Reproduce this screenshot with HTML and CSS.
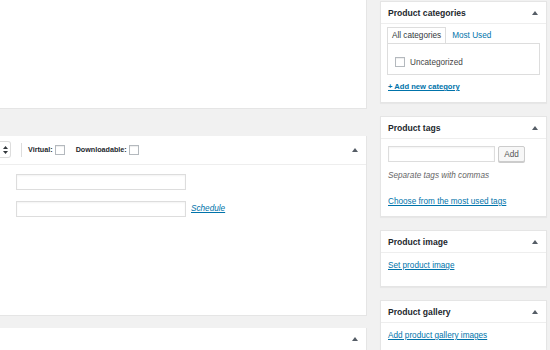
FILE: index.html
```html
<!DOCTYPE html>
<html lang="en">
<head>
    <meta charset="UTF-8">
    <title>Edit product</title>
    <link rel="stylesheet" href="styles.css">
</head>
<body>

    <div class="page">
        <div class="main">
            <div class="panel panel-top"></div>

            <div class="panel product-data">
                <div class="pd-head">
                    <div class="type-select">
                        <svg width="5" height="8" viewBox="0 0 5 8"><polygon points="0,3 2.5,0 5,3" fill="#32373c"/><polygon points="0,5 2.5,8 5,5" fill="#32373c"/></svg>
                    </div>
                    <span class="divider"></span>
                    <label class="opt">Virtual: <span class="check"></span></label>
                    <label class="opt">Downloadable: <span class="check"></span></label>
                    <span class="toggle"><svg width="6" height="4" viewBox="0 0 6 4"><polygon points="0,4 3,0 6,4" fill="#555d66"/></svg></span>
                </div>
                <div class="pd-body">
                    <div class="field"><span class="text-input"></span></div>
                    <div class="field"><span class="text-input"></span><a class="schedule" href="#">Schedule</a></div>
                </div>
            </div>

            <div class="panel panel-bottom">
                <div class="pb-head">
                    <span class="toggle"><svg width="6" height="4" viewBox="0 0 6 4"><polygon points="0,4 3,0 6,4" fill="#555d66"/></svg></span>
                </div>
            </div>
        </div>

        <aside class="side">
            <div class="box box-cats">
                <div class="box-head">
                    <h2>Product categories</h2>
                    <svg width="6" height="4" viewBox="0 0 6 4"><polygon points="0,4 3,0 6,4" fill="#555d66"/></svg>
                </div>
                <div class="box-body">
                    <div class="tabs">
                        <span class="tab active">All categories</span>
                        <a class="tab" href="#">Most Used</a>
                    </div>
                    <div class="tab-panel">
                        <label class="cat"><span class="check"></span>Uncategorized</label>
                    </div>
                    <a class="link add-cat" href="#">+ Add new category</a>
                </div>
            </div>

            <div class="box box-tags">
                <div class="box-head">
                    <h2>Product tags</h2>
                    <svg width="6" height="4" viewBox="0 0 6 4"><polygon points="0,4 3,0 6,4" fill="#555d66"/></svg>
                </div>
                <div class="box-body">
                    <div class="tag-row">
                        <span class="text-input tag-input"></span>
                        <button class="button">Add</button>
                    </div>
                    <p class="howto">Separate tags with commas</p>
                    <a class="link most-used" href="#">Choose from the most used tags</a>
                </div>
            </div>

            <div class="box box-image">
                <div class="box-head">
                    <h2>Product image</h2>
                    <svg width="6" height="4" viewBox="0 0 6 4"><polygon points="0,4 3,0 6,4" fill="#555d66"/></svg>
                </div>
                <div class="box-body">
                    <a class="link" href="#">Set product image</a>
                </div>
            </div>

            <div class="box box-gallery">
                <div class="box-head">
                    <h2>Product gallery</h2>
                    <svg width="6" height="4" viewBox="0 0 6 4"><polygon points="0,4 3,0 6,4" fill="#555d66"/></svg>
                </div>
                <div class="box-body">
                    <a class="link" href="#">Add product gallery images</a>
                </div>
            </div>
        </aside>
    </div>

</body>
</html>
```

FILE: styles.css
```css
body {
    margin: 0;
    background: #f1f1f1;
    font-family: "Liberation Sans", Arial, sans-serif;
    font-size: 8.2px;
    color: #444;
}
.page {
    display: flex;
    gap: 13px;
    height: 350px;
    overflow: hidden;
}
.main {
    width: 367px;
    display: flex;
    flex-direction: column;
}
.panel {
    background: #fff;
    border-right: 1px solid #e5e5e5;
    border-bottom: 1px solid #e5e5e5;
}
.panel-top {
    height: 109px;
    margin-bottom: 27px;
}
.product-data {
    height: 182px;
    margin-bottom: 12px;
}
.pd-head {
    height: 28px;
    border-bottom: 1px solid #eee;
    display: flex;
    align-items: center;
}
.type-select {
    width: 10px;
    height: 15px;
    border: 1px solid #ddd;
    border-left: none;
    border-radius: 0 3px 3px 0;
    display: flex;
    align-items: center;
}
.type-select svg {
    margin-left: 3px;
}
.divider {
    width: 1px;
    height: 14px;
    background: #ddd;
    margin: 0 6px 0 10px;
}
.opt {
    font-size: 7.2px;
    font-weight: bold;
    color: #23282d;
    display: flex;
    align-items: center;
    margin-right: 11px;
}
.opt .check {
    margin-left: 2px;
}
.check {
    display: inline-block;
    width: 8px;
    height: 8px;
    border: 1px solid #b4b9be;
    background: #fff;
    box-shadow: inset 0 1px 1px rgba(0, 0, 0, 0.07);
}
.toggle {
    margin-left: auto;
    margin-right: 8px;
    display: flex;
}
.pd-body {
    padding: 9px 0 0 16px;
}
.field {
    display: flex;
    align-items: center;
    margin-bottom: 11px;
}
.text-input {
    display: inline-block;
    width: 168px;
    height: 14px;
    border: 1px solid #ddd;
    background: #fff;
    box-shadow: inset 0 1px 2px rgba(0, 0, 0, 0.05);
}
.schedule {
    margin-left: 5px;
    font-style: italic;
    color: #0073aa;
}
.panel-bottom {
    flex: 1;
    border-bottom: none;
}
.pb-head {
    height: 22px;
    display: flex;
    align-items: center;
}
.side {
    width: 167px;
    padding-top: 1px;
    display: flex;
    flex-direction: column;
    gap: 13px;
}
.box {
    background: #fff;
    border: 1px solid #e5e5e5;
    box-shadow: 0 1px 1px rgba(0, 0, 0, 0.04);
}
.box-head {
    height: 21px;
    border-bottom: 1px solid #eee;
    display: flex;
    align-items: center;
    justify-content: space-between;
    padding: 0 7px;
}
.box-head h2 {
    margin: 0;
    font-size: 8.6px;
    color: #23282d;
}
.box-head svg {
    margin-right: 1px;
}
.box-body {
    padding: 0 6px 0 7px;
}
a.link, .tab {
    color: #0073aa;
}
.box-cats .box-body {
    padding-top: 3px;
    padding-bottom: 10px;
}
.tabs {
    display: flex;
    height: 16px;
    align-items: flex-end;
}
.tab {
    padding: 0 4px;
    line-height: 15px;
    text-decoration: none;
    border: 1px solid transparent;
    border-bottom: none;
}
.tab.active {
    color: #32373c;
    border-color: #ddd;
    background: #fff;
    margin-left: -1px;
    margin-right: 1px;
}
.tab-panel {
    height: 30px;
    border: 1px solid #ddd;
    margin-left: -1px;
    display: flex;
    align-items: center;
    padding-left: 7px;
}
.cat {
    display: flex;
    align-items: center;
    color: #444;
    margin-top: 6px;
}
.cat .check {
    margin-right: 5px;
}
.add-cat {
    display: block;
    margin-top: 7px;
    line-height: 10px;
    font-weight: bold;
    font-size: 7.6px;
}
.box-tags .box-body {
    padding-top: 7px;
    padding-bottom: 9px;
}
.tag-row {
    display: flex;
    align-items: center;
}
.tag-input {
    width: 105px;
}
.button {
    margin-left: 3px;
    width: 27px;
    height: 16px;
    padding: 0;
    font-family: inherit;
    font-size: 8.2px;
    color: #555;
    background: #f7f7f7;
    border: 1px solid #ccc;
    border-radius: 2px;
    box-shadow: 0 1px 0 #ccc;
}
.howto {
    margin: 9px 0 0;
    line-height: 10px;
    font-style: italic;
    color: #666;
}
.most-used {
    display: block;
    margin-top: 16px;
    line-height: 10px;
}
.box-image .box-body {
    padding-top: 8px;
    padding-bottom: 15px;
    line-height: 10px;
}
.box-gallery .box-body {
    padding-top: 8px;
    line-height: 10px;
    height: 40px;
}
```
